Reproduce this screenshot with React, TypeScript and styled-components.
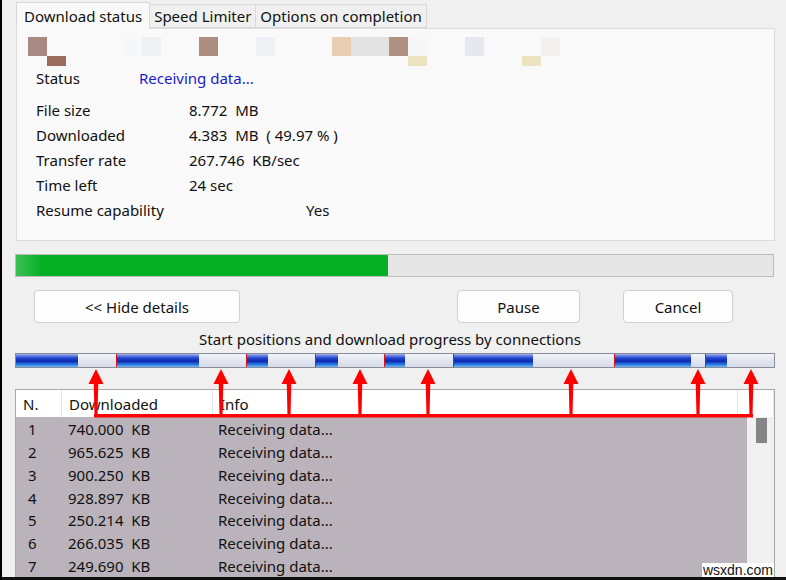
import React from "react";
import styled, { createGlobalStyle } from "styled-components";

const GlobalStyle = createGlobalStyle`
  html, body {
    margin: 0;
    padding: 0;
    background: #f0f0f0;
  }
  * {
    box-sizing: border-box;
  }
`;

const Frame = styled.div`
  position: relative;
  width: 786px;
  height: 580px;
  overflow: hidden;
  background: #f0f0f0;
  box-shadow: inset 2px 0 0 #000, inset 0 -3px 0 #111;
  font-family: "Noto Sans", "Open Sans", sans-serif;
  font-size: 15px;
  color: #111;
  padding-top: 1px;
`;

const TabStrip = styled.div`
  display: flex;
  align-items: flex-end;
  height: 27px;
  margin-left: 16px;
`;

const Tab = styled.div<{ $active?: boolean }>`
  height: ${(p) => (p.$active ? "27px" : "24px")};
  padding: 0 ${(p) => (p.$active ? "7px" : "4px")};
  display: flex;
  align-items: center;
  background: ${(p) => (p.$active ? "#f9f9f9" : "#f0f0f0")};
  border: 1px solid #d9d9d9;
  border-bottom: ${(p) => (p.$active ? "none" : "1px solid #d9d9d9")};
  margin-left: ${(p) => (p.$active ? "0" : "-1px")};
  position: relative;
  z-index: ${(p) => (p.$active ? 2 : 1)};
  margin-bottom: ${(p) => (p.$active ? "-1px" : "0")};
  white-space: nowrap;
`;

const Panel = styled.div`
  margin: 0 11px 0 16px;
  height: 213px;
  background: #f9f9f9;
  border: 1px solid #dcdcdc;
  padding: 8px 0 0 11px;
`;

const Mosaic = styled.div`
  display: grid;
  grid-template-columns: repeat(28, 19px);
  grid-template-rows: 19px 10px;
`;

const Cell = styled.div<{ $c: string }>`
  background: ${(p) => p.$c};
`;

const InfoList = styled.div`
  margin-top: -1px;
  padding-left: 8px;
`;

const InfoRow = styled.div<{ $gap?: number }>`
  display: flex;
  align-items: center;
  height: 25px;
  margin-bottom: ${(p) => p.$gap ?? 0}px;
`;

const Label = styled.div<{ $w: number }>`
  width: ${(p) => p.$w}px;
  flex: none;
`;

const Value = styled.div<{ $blue?: boolean }>`
  color: ${(p) => (p.$blue ? "#1a1ad0" : "#111")};
  white-space: pre;
`;

const Progress = styled.div`
  margin: 13px 12px 0 15px;
  height: 23px;
  border: 1px solid #bcbcbc;
  background: #e6e6e6;
`;

const ProgressFill = styled.div`
  height: 100%;
  background: linear-gradient(90deg, #3cc055 0px, #06b025 26px, #06b025 100%);
`;

const ButtonRow = styled.div`
  display: flex;
  align-items: center;
  margin-top: 13px;
  padding-left: 34px;
  height: 33px;
`;

const Button = styled.button<{ $w: number; $ml?: number }>`
  width: ${(p) => p.$w}px;
  height: 33px;
  margin-left: ${(p) => p.$ml ?? 0}px;
  background: #fdfdfd;
  border: 1px solid #d0d0d0;
  border-radius: 4px;
  font-family: inherit;
  font-size: 15px;
  color: #111;
  padding: 0;
`;

const Caption = styled.div`
  text-align: center;
  margin-top: 5px;
  height: 22px;
  line-height: 22px;
  padding-right: 6px;
`;

const ConnBar = styled.div`
  display: flex;
  margin: 3px 11px 0 15px;
  height: 15px;
  border: 1px solid #8a8a9a;
  background: #e2e6f0;
`;

const ConnSeg = styled.div<{ $first?: boolean }>`
  display: flex;
  height: 100%;
  border-left: ${(p) => (p.$first ? "none" : "1px solid #e01010")};
`;

const Done = styled.div`
  height: 100%;
  background: linear-gradient(
    180deg,
    #9fb2ee 0%,
    #2848d0 30%,
    #0a28b0 55%,
    #2a78e0 80%,
    #6ab8f8 100%
  );
`;

const Remaining = styled.div`
  height: 100%;
  flex: 1;
  background: linear-gradient(180deg, #f4f6fb 0%, #e2e6f0 50%, #d6dbe8 100%);
`;

const Table = styled.div`
  margin: 21px 11px 0 15px;
  height: 188px;
  border: 1px solid #a8a8a8;
  border-bottom: none;
  display: flex;
  flex-direction: column;
  background: #bbb3bb;
`;

const HeaderRow = styled.div`
  display: flex;
  height: 27px;
  background: #fff;
  flex: none;
`;

const HeadCell = styled.div<{ $w?: number }>`
  ${(p) => (p.$w ? `width: ${p.$w}px; flex: none;` : "flex: 1;")}
  display: flex;
  align-items: center;
  padding-left: 7px;
  border-right: 1px solid #e5e5e5;
  height: 100%;
`;

const Body = styled.div`
  display: flex;
  flex: 1;
  min-height: 0;
`;

const Rows = styled.div`
  flex: 1;
  padding-top: 1px;
`;

const Row = styled.div`
  display: flex;
  align-items: center;
  height: 22.75px;
`;

const RowCell = styled.div<{ $w?: number; $pl: number }>`
  ${(p) => (p.$w ? `width: ${p.$w}px; flex: none;` : "flex: 1;")}
  padding-left: ${(p) => p.$pl}px;
  white-space: pre;
`;

const Scrollbar = styled.div`
  width: 27px;
  flex: none;
  background: #f0f0f0;
  padding: 1px 0 0 9px;
`;

const Thumb = styled.div`
  width: 11px;
  height: 25px;
  background: #858585;
`;

const Overlay = styled.svg`
  position: absolute;
  left: 0;
  top: 0;
  pointer-events: none;
`;

const Watermark = styled.div`
  position: absolute;
  right: 12px;
  bottom: 3px;
  background: #fff;
  padding: 0 1px;
  font-family: "Liberation Sans", Arial, sans-serif;
  font-size: 14px;
  line-height: 14px;
  color: #111;
`;

const mosaicCells: [number, number, string][] = [
  [1, 1, "#a88a82"],
  [6, 1, "#f6f7f9"],
  [7, 1, "#eef0f4"],
  [10, 1, "#ad8d80"],
  [13, 1, "#eef0f6"],
  [17, 1, "#e8cdb2"],
  [18, 1, "#e3e3e3"],
  [19, 1, "#e3e3e3"],
  [20, 1, "#b09182"],
  [21, 1, "#f6f7f9"],
  [24, 1, "#e6e8f0"],
  [28, 1, "#f2f1ee"],
  [2, 2, "#9b6b5b"],
  [21, 2, "#ece3c0"],
  [27, 2, "#ece3c0"],
];

const connections = [
  { w: 100, done: 62 },
  { w: 130, done: 82 },
  { w: 69, done: 21 },
  { w: 69, done: 22 },
  { w: 69, done: 20 },
  { w: 161, done: 79 },
  { w: 91, done: 76 },
  { w: 69, done: 21 },
];

const rows = [
  ["1", "740.000  KB"],
  ["2", "965.625  KB"],
  ["3", "900.250  KB"],
  ["4", "928.897  KB"],
  ["5", "250.214  KB"],
  ["6", "266.035  KB"],
  ["7", "249.690  KB"],
];

const arrowXs = [96, 221, 289, 360, 428, 571, 698, 751];

function Arrow({ x }: { x: number }) {
  return (
    <g fill="#ff0000">
      <polygon points={`${x},369 ${x - 7.5},384 ${x + 7.5},384`} />
      <polygon points={`${x - 2.3},382 ${x + 2.3},382 ${x + 1.5},416 ${x - 1.5},416`} />
    </g>
  );
}

export default function App() {
  return (
    <>
      <GlobalStyle />
      <Frame>
        <TabStrip>
          <Tab $active>Download status</Tab>
          <Tab>Speed Limiter</Tab>
          <Tab>Options on completion</Tab>
        </TabStrip>
        <Panel>
          <Mosaic>
            {mosaicCells.map(([c, r, col], i) => (
              <Cell key={i} $c={col} style={{ gridColumn: c, gridRow: r }} />
            ))}
          </Mosaic>
          <InfoList>
            <InfoRow $gap={7}>
              <Label $w={103}>Status</Label>
              <Value $blue>Receiving data...</Value>
            </InfoRow>
            <InfoRow>
              <Label $w={153}>File size</Label>
              <Value>8.772  MB</Value>
            </InfoRow>
            <InfoRow>
              <Label $w={153}>Downloaded</Label>
              <Value>4.383  MB  ( 49.97 % )</Value>
            </InfoRow>
            <InfoRow>
              <Label $w={153}>Transfer rate</Label>
              <Value>267.746  KB/sec</Value>
            </InfoRow>
            <InfoRow>
              <Label $w={153}>Time left</Label>
              <Value>24 sec</Value>
            </InfoRow>
            <InfoRow>
              <Label $w={270}>Resume capability</Label>
              <Value>Yes</Value>
            </InfoRow>
          </InfoList>
        </Panel>
        <Progress>
          <ProgressFill style={{ width: "49.1%" }} />
        </Progress>
        <ButtonRow>
          <Button $w={206}>&lt;&lt; Hide details</Button>
          <Button $w={123} $ml={217}>Pause</Button>
          <Button $w={110} $ml={43}>Cancel</Button>
        </ButtonRow>
        <Caption>Start positions and download progress by connections</Caption>
        <ConnBar>
          {connections.map((c, i) => (
            <ConnSeg key={i} $first={i === 0} style={{ width: c.w }}>
              <Done style={{ width: c.done }} />
              <Remaining />
            </ConnSeg>
          ))}
        </ConnBar>
        <Table>
          <HeaderRow>
            <HeadCell $w={46}>N.</HeadCell>
            <HeadCell $w={151}>Downloaded</HeadCell>
            <HeadCell $w={525}>Info</HeadCell>
            <HeadCell />
          </HeaderRow>
          <Body>
            <Rows>
              {rows.map(([n, d]) => (
                <Row key={n}>
                  <RowCell $w={52} $pl={12}>{n}</RowCell>
                  <RowCell $w={150} $pl={0}>{d}</RowCell>
                  <RowCell $pl={0}>Receiving data...</RowCell>
                </Row>
              ))}
            </Rows>
            <Scrollbar>
              <Thumb />
            </Scrollbar>
          </Body>
        </Table>
        <Overlay width={786} height={580} viewBox="0 0 786 580">
          {arrowXs.map((x) => (
            <Arrow key={x} x={x} />
          ))}
          <rect x={94} y={414} width={659} height={3.5} fill="#ff0000" />
        </Overlay>
        <Watermark>wsxdn.com</Watermark>
      </Frame>
    </>
  );
}
